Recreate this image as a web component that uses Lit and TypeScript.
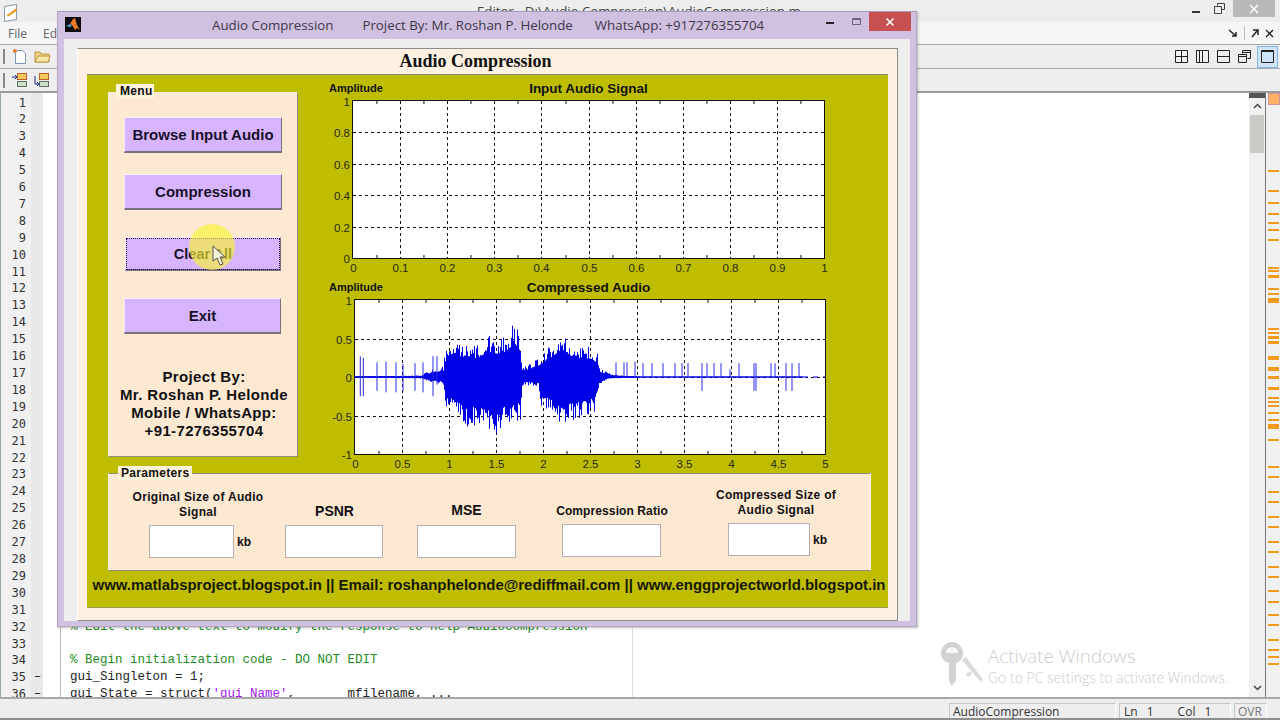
import { LitElement, html, css, svg } from "lit";
import { customElement, property } from "lit/decorators.js";

type Pt = [number, number];

const TOP_ENV: Pt[] = [
  [0, 0.01], [0.7, 0.02], [0.75, 0.06], [0.85, 0.1], [0.94, 0.14], [0.95, 0.3], [1.0, 0.5],
  [1.1, 0.42], [1.2, 0.45], [1.3, 0.4], [1.4, 0.55], [1.5, 0.5], [1.6, 0.55], [1.7, 0.72],
  [1.76, 0.55], [1.77, 0.12], [1.9, 0.2], [2.0, 0.3], [2.1, 0.45], [2.2, 0.6], [2.3, 0.45],
  [2.4, 0.4], [2.5, 0.4], [2.58, 0.3], [2.6, 0.1], [2.7, 0.06], [2.75, 0.03], [3.0, 0.01],
  [3.02, 0.005], [4.8, 0.005],
];
const BOT_ENV: Pt[] = [
  [0, 0.01], [0.7, 0.02], [0.75, 0.05], [0.94, 0.1], [0.95, 0.36], [1.05, 0.5], [1.2, 0.68],
  [1.3, 0.62], [1.5, 0.8], [1.6, 0.62], [1.76, 0.56], [1.78, 0.1], [1.95, 0.13], [1.96, 0.36],
  [2.1, 0.5], [2.2, 0.66], [2.3, 0.56], [2.4, 0.54], [2.55, 0.45], [2.6, 0.1], [2.7, 0.02],
  [3, 0.01], [4.8, 0.005],
];
// isolated clicks: x measured in px from the plot's left edge, then top/bottom amplitude
const CLICKS: [number, number, number][] = [
  [5.3, 0.27, 0.25], [8.3, 0.25, 0.25], [22, 0.19, 0.18], [31, 0.2, 0.2], [41, 0.19, 0.2],
  [48, 0.17, 0.18], [60, 0.18, 0.18], [68, 0.19, 0.2], [78, 0.27, 0.25], [82, 0.27, 0.1],
  [261, 0.19, 0], [269, 0.19, 0], [272, 0.19, 0], [280, 0.2, 0], [288, 0.18, 0], [297, 0.18, 0],
  [308, 0.18, 0], [320, 0.18, 0], [327, 0.18, 0], [333, 0.18, 0], [347, 0.18, 0.18], [352, 0.18, 0],
  [359, 0.18, 0], [366, 0.18, 0], [375, 0.1, 0], [384, 0.18, 0], [399, 0.18, 0.18], [401, 0.18, 0.18],
  [416, 0.18, 0], [420, 0.18, 0], [431, 0.18, 0.18], [437, 0.18, 0.18], [444, 0.18, 0],
];
const GUTTER_MARKS: [number, number][] = [
  [170, 2], [190, 2], [202, 2], [213, 2], [222, 2], [229, 2], [239, 2], [267, 2], [270, 2], [275, 3],
  [288, 2], [293, 2], [298, 5], [328, 2], [332, 2], [336, 3], [341, 3], [356, 4], [367, 4], [376, 3],
  [387, 3], [397, 2], [401, 2], [405, 2], [412, 2], [419, 2], [424, 5], [439, 2], [466, 2], [476, 2],
  [491, 2], [501, 2], [516, 2], [526, 2], [541, 2], [551, 2], [566, 2], [576, 2], [590, 2], [601, 2],
  [614, 2], [624, 2], [639, 2], [649, 2], [656, 2], [663, 2],
];

function interp(table: Pt[], t: number) {
  for (let i = 1; i < table.length; i++) {
    const [t0, v0] = table[i - 1];
    const [t1, v1] = table[i];
    if (t <= t1) return v0 + ((v1 - v0) * (t - t0)) / (t1 - t0);
  }
  return 0;
}

function wavePath(w: number, h: number) {
  let seed = 4711;
  const rnd = () => {
    seed = (seed * 1664525 + 1013904223) % 4294967296;
    return seed / 4294967296;
  };
  const mid = h / 2;
  let d = "";
  for (let x = 0; x < w; x += 1) {
    const t = (x / w) * 5;
    if (t > 3) break;
    const up = interp(TOP_ENV, t) * (0.6 + 0.42 * Math.pow(rnd(), 2));
    const down = interp(BOT_ENV, t) * (0.6 + 0.42 * Math.pow(rnd(), 2));
    d += `M${x + 0.5} ${(mid - up * mid).toFixed(1)}V${(mid + down * mid).toFixed(1)}`;
  }
  return d;
}

@customElement("audio-plot")
export class AudioPlot extends LitElement {
  static override styles = css`
    :host {
      display: block;
    }
    svg {
      display: block;
      overflow: visible;
    }
    .tick {
      font: 11.5px "Liberation Sans", Arial, sans-serif;
      fill: #2a2a1a;
    }
    .amp {
      font: bold 11px "Liberation Sans", Arial, sans-serif;
      fill: #111;
    }
    .title {
      font: bold 13.5px "Liberation Sans", Arial, sans-serif;
      fill: #111;
    }
  `;

  @property({ type: String }) heading = "";
  @property({ type: Number }) left = 0;
  @property({ type: Number }) top = 0;
  @property({ type: Number }) plotW = 0;
  @property({ type: Number }) plotH = 0;
  @property({ type: Number }) viewH = 0;
  @property({ attribute: false }) xTicks: string[] = [];
  @property({ attribute: false }) yTicks: string[] = [];
  @property({ type: Boolean }) wave = false;

  override render() {
    const { left: l, top: t, plotW: w, plotH: h } = this;
    const nx = this.xTicks.length - 1;
    const ny = this.yTicks.length - 1;
    const r = l + w;
    const b = t + h;
    return html`<svg width="540" height=${this.viewH}>
      <text class="amp" x="11" y="12">Amplitude</text>
      <text class="title" x="270.500" y="12.500" text-anchor="middle">${this.heading}</text>
      <rect x=${l} y=${t} width=${w} height=${h} fill="#fff"></rect>
      ${this.yTicks.map((label, i) => {
        const y = Math.round(b - (h * i) / ny) + 0.5;
        return svg`
          ${i > 0 && i < ny
            ? svg`<line x1=${l} x2=${r} y1=${y} y2=${y} stroke="#111" stroke-dasharray="3 3"></line>`
            : ""}
          <text class="tick" x=${l - 3} y=${y + 4} text-anchor="end">${label}</text>`;
      })}
      ${this.xTicks.map((label, i) => {
        const x = Math.round(l + (w * i) / nx) + 0.5;
        const half = x - w / nx / 2;
        return svg`
          ${i > 0 && i < nx
            ? svg`<line x1=${x} x2=${x} y1=${t} y2=${b} stroke="#111" stroke-dasharray="3 3"></line>`
            : ""}
          ${i > 0
            ? svg`<path d="M${half} ${t}v3M${half} ${b}v-3" stroke="#111"></path>`
            : ""}
          <text class="tick" x=${x} y=${b + 14} text-anchor="middle">${label}</text>`;
      })}
      ${this.wave
        ? svg`<g transform="translate(${l} ${t})">
            <path d=${wavePath(w, h)} stroke="#0000e6" stroke-width="1" fill="none"></path>
            <path d="M0 ${h / 2}H448" stroke="#0000e6" stroke-width="1.600"></path>
            <path d="M448 ${h / 2}H470" stroke="#0000e6" stroke-dasharray="5 5"></path>
            ${CLICKS.map(
              ([x, up, down]) =>
                svg`<path d="M${x} ${h / 2 - (up * h) / 2}V${h / 2 + (down * h) / 2}" stroke="#2a2ae6" stroke-width="1"></path>`,
            )}
          </g>`
        : ""}
      <rect x=${l - 0.5} y=${t - 0.5} width=${w + 1} height=${h + 1} fill="none" stroke="#111"></rect>
    </svg>`;
  }
}

@customElement("app-root")
export class AppRoot extends LitElement {
  static override styles = css`
    :host {
      display: block;
      position: relative;
      width: 1280px;
      height: 720px;
      overflow: hidden;
      background: #eeeeee;
      font-family: "Liberation Sans", Arial, sans-serif;
    }

    /* editor behind the figure */
    .editor {
      display: flex;
      flex-direction: column;
      height: 720px;
    }
    .top-title {
      display: flex;
      align-items: flex-start;
      height: 22px;
      flex: none;
      background: #ededed;
    }
    .app-icon {
      margin: 3px 0 0 3px;
    }
    .doc-name {
      margin: 2px 0 0 456px;
      font: 13.200px "Open Sans", sans-serif;
      color: #444;
      white-space: nowrap;
      width: 706px;
    }
    .win-btns {
      display: flex;
      align-items: flex-start;
    }
    .win-btn {
      width: 24px;
      height: 17px;
      display: flex;
      align-items: center;
      justify-content: center;
    }
    .win-close {
      width: 42px;
      margin-left: 2px;
      background: #b9b9b9;
    }
    .menu-bar {
      display: flex;
      align-items: center;
      justify-content: space-between;
      box-sizing: border-box;
      height: 23px;
      flex: none;
      background: #f5f5f5;
      border-bottom: 1px solid #a9a9a9;
      font: 12px "Open Sans", sans-serif;
      color: #666;
      padding: 0 6px 0 8px;
    }
    .menu-items {
      display: flex;
      gap: 16px;
    }
    .dock-icons {
      display: flex;
      align-items: center;
      gap: 6px;
    }
    .dock-sep {
      width: 1px;
      height: 14px;
      background: #bbb;
    }
    .tool-row {
      display: flex;
      align-items: center;
      justify-content: space-between;
      box-sizing: border-box;
      height: 24px;
      flex: none;
      background: #eeeeee;
      border-bottom: 1px solid #a9a9a9;
      padding-left: 3px;
    }
    .tool-left {
      display: flex;
      align-items: center;
      gap: 6px;
    }
    .grip {
      width: 2px;
      height: 15px;
      margin-right: 1px;
      background-image: radial-gradient(#888 1px, transparent 1px);
      background-size: 2px 5px;
    }
    .layout-icons {
      display: flex;
      align-items: center;
      gap: 4px;
      padding-right: 2px;
    }
    .layout-on {
      box-sizing: border-box;
      width: 21px;
      height: 22px;
      display: flex;
      align-items: center;
      justify-content: center;
      background: #cfe4f8;
      border: 1px solid #86b6e6;
    }
    .tool-row.tall {
      border-bottom: 2px solid #9c9c9c;
    }
    .edit-area {
      position: relative;
      flex: 1;
      display: flex;
      min-height: 0;
      border-left: 1px solid #9aa;
      overflow: hidden;
    }
    .code {
      flex: 1;
      min-width: 0;
      overflow: hidden;
      padding-top: 1.500px;
      background: linear-gradient(90deg, #f0f0f0 0 30px, #e8e8e8 30px 42px, #fff 42px);
    }
    .row {
      display: flex;
      height: 16.920px;
      line-height: 16.920px;
      white-space: pre;
    }
    .num {
      width: 25px;
      text-align: right;
      font: 12px/16.920px "DejaVu Sans Mono", monospace;
      color: #333;
    }
    .dash {
      width: 24px;
      padding-left: 8px;
      box-sizing: border-box;
      font: 12px/16.920px "Liberation Mono", monospace;
      color: #222;
    }
    .gap {
      width: 11px;
      margin-right: 9px;
      border-right: 1px solid #bbb;
      box-sizing: border-box;
    }
    .txt {
      font: 12.500px/16.920px "Liberation Mono", monospace;
      color: #222;
    }
    .cmt {
      color: #228b22;
    }
    .str {
      color: #a020f0;
    }
    .margin-line {
      position: absolute;
      left: 631px;
      top: 0;
      bottom: 0;
      width: 1px;
      background: #dcdcdc;
    }
    .scroll {
      width: 16px;
      display: flex;
      flex-direction: column;
      align-items: center;
      background: #f0f0f0;
    }
    .scroll-head {
      align-self: stretch;
      height: 5px;
      background: #555;
    }
    .scroll-up {
      margin-top: 5px;
    }
    .scroll-thumb {
      width: 14px;
      height: 38px;
      margin-top: 6px;
      background: #c9c9c6;
    }
    .scroll-down {
      margin-top: auto;
      margin-bottom: 6px;
    }
    .marks {
      position: relative;
      width: 15px;
      background: #f1f1f1;
      border-left: 1px solid #777;
      box-sizing: border-box;
    }
    .mark {
      position: absolute;
      left: 2px;
      right: 1px;
      background: #f39a1d;
    }
    .mark-box {
      position: absolute;
      left: 2px;
      top: 0;
      width: 10px;
      height: 10px;
      background: #ffb066;
      border: 1px solid #c99;
    }
    .status {
      display: flex;
      align-items: flex-end;
      flex: none;
      height: 19px;
      padding-right: 13px;
      justify-content: flex-end;
      gap: 3px;
      background: #eeeeee;
      border-top: 2px solid #a8a8a8;
      border-bottom: 2px solid #8f8f8f;
      box-sizing: content-box;
      font: 12px "Open Sans", sans-serif;
      color: #333;
    }
    .stat {
      display: flex;
      align-items: center;
      height: 15px;
      padding-left: 3px;
      box-sizing: border-box;
      border-top: 1px solid #c6c6c6;
      border-left: 1px solid #c6c6c6;
      border-right: 1px solid #fff;
    }
    .stat-name {
      width: 167px;
    }
    .stat-pos {
      width: 112px;
      word-spacing: 6px;
      padding-left: 4px;
    }
    .stat-pos span + span {
      margin-left: 24px;
    }
    .stat-ovr {
      width: 33px;
      color: #777;
    }

    .watermark {
      position: absolute;
      left: 940px;
      top: 642px;
      display: flex;
      gap: 5px;
      color: #cdcdcd;
      font-family: "Open Sans", sans-serif;
      white-space: nowrap;
    }
    .wm-1 {
      font-size: 18.800px;
      font-weight: 300;
      line-height: 24px;
      margin-top: 2px;
    }
    .wm-2 {
      font-size: 14px;
      font-weight: 300;
      line-height: 20px;
    }

    /* matlab figure window */
    .figure {
      position: absolute;
      left: 57px;
      top: 11px;
      width: 860px;
      height: 616px;
      box-sizing: border-box;
      background: #d0c1e0;
      border: 1px solid #b3a6c2;
      border-top: 1px solid #a89bb8;
      box-shadow: 1px 1px 2px rgba(0, 0, 0, 0.25);
      padding: 0 6px 5px;
      display: flex;
      flex-direction: column;
    }
    .fig-bar {
      display: flex;
      align-items: flex-start;
      height: 27px;
      flex: none;
      font: 13.300px "Open Sans", sans-serif;
      color: #3d3848;
      white-space: nowrap;
    }
    .fig-icon {
      flex: none;
      margin: 5px 0 0 1px;
    }
    .fig-title {
      flex: none;
      margin: 4px 0 0 131px;
      width: 605px;
      display: flex;
      gap: 29px;
    }
    .fig-phone {
      margin-left: -7px;
    }
    .fig-btn {
      flex: none;
      width: 26px;
      height: 19px;
      display: flex;
      align-items: center;
      justify-content: center;
    }
    .fig-close {
      width: 42px;
      background: #c75050;
    }
    .fig-body {
      flex: 1;
      background: #eeeeee;
      padding: 9px 13px 0;
      min-height: 0;
    }
    .cream {
      box-sizing: border-box;
      width: 821px;
      height: 573px;
      background: #fef1e2;
      border-top: 1px solid #8c8c8c;
      border-right: 1px solid #8c8c8c;
      border-bottom: 1px solid #8c8c8c;
      border-left: 1px solid #fff;
      padding: 0 9px 0;
    }
    .main-title {
      height: 25px;
      padding-right: 24px;
      text-align: center;
      font: bold 18px/24px "Liberation Serif", "Times New Roman", serif;
      color: #111;
    }
    .olive {
      box-sizing: border-box;
      width: 801px;
      height: 534px;
      background: #bfbd00;
      border-top: 1px solid #8e8e6a;
      border-bottom: 1px solid #9a9a50;
      padding: 5px 0 0 21px;
    }
    .top-row {
      display: flex;
      height: 389px;
    }
    .menu-panel {
      position: relative;
      box-sizing: border-box;
      width: 190px;
      height: 365px;
      margin-top: 12px;
      background: #fde8d2;
      border: 1px solid #f3f0e6;
      border-right-color: #8e8e7c;
      border-bottom-color: #8e8e7c;
      padding: 24px 0 0 15px;
    }
    .legend {
      position: absolute;
      background: #fff3da;
      font: bold 12px/14px "Liberation Sans", Arial, sans-serif;
      letter-spacing: 0.300px;
      color: #111;
      padding: 0 3px;
    }
    .menu-panel .legend {
      left: 7px;
      top: -9px;
      padding-left: 4px;
      padding-right: 1px;
    }
    .btn {
      box-sizing: border-box;
      display: flex;
      align-items: center;
      justify-content: center;
      width: 158px;
      height: 36px;
      background: #d7b4fe;
      border: 1px solid;
      border-color: #f6f0ff #77727d #77727d #f0e8ff;
      border-bottom-width: 2px;
      font: bold 15px "Liberation Sans", Arial, sans-serif;
      color: #17112a;
    }
    .btn-2 {
      margin-top: 21px;
    }
    .btn-3 {
      width: 156px;
      height: 34px;
      margin: 27px 0 0 1px;
      font-size: 14.500px;
      outline: 1px dotted #2a0a60;
      outline-offset: -2px;
    }
    .btn-4 {
      width: 157px;
      margin-top: 27px;
    }
    .credit {
      width: 190px;
      margin: 34px 0 0 -15px;
      text-align: center;
      font: bold 15px/18px "Liberation Sans", Arial, sans-serif;
      letter-spacing: 0.350px;
      color: #111;
    }
    .plots {
      margin-left: 20px;
    }
    .params {
      position: relative;
      box-sizing: border-box;
      display: flex;
      align-items: flex-end;
      width: 763px;
      height: 98px;
      margin-top: 4px;
      background: #fde8d2;
      border: 1px solid #8a8a70;
      border-left-color: #f3f0e6;
      border-right-color: #f3f0e6;
      border-bottom-color: #8e8e7c;
    }
    .params .legend {
      left: 9px;
      top: -8px;
    }
    .param {
      display: flex;
      flex-direction: column;
      flex: none;
      margin-bottom: 12px;
    }
    .p-label {
      text-align: center;
      white-space: nowrap;
      font: bold 12px/15px "Liberation Sans", Arial, sans-serif;
      letter-spacing: 0.300px;
      color: #111;
      margin-bottom: 5px;
    }
    .p-label.big {
      font-size: 14px;
      letter-spacing: 0;
      margin-bottom: 7px;
    }
    .p-input {
      display: flex;
      align-items: center;
      gap: 3px;
      font: bold 12px "Liberation Sans", Arial, sans-serif;
      color: #111;
    }
    .box {
      box-sizing: border-box;
      flex: none;
      height: 33px;
      background: #fff;
      border: 1px solid #b4b0b0;
    }
    .p1 {
      width: 136px;
      margin-left: 21px;
    }
    .p1 .p-input {
      margin-left: 19px;
    }
    .p1 .box {
      width: 85px;
    }
    .p2 {
      width: 99px;
      margin-left: 19px;
    }
    .p2 .p-label.big {
      margin-bottom: 6px;
    }
    .p2 .box {
      width: 98px;
    }
    .p3 {
      width: 99px;
      margin-left: 33px;
    }
    .p3 .box {
      width: 99px;
    }
    .p4 {
      width: 112px;
      margin-left: 40px;
      margin-bottom: 13px;
    }
    .p4 .p-label {
      letter-spacing: 0.100px;
    }
    .p4 .p-input {
      margin-left: 6px;
    }
    .p4 .box {
      width: 99px;
    }
    .p5 {
      width: 120px;
      margin-left: 48px;
      margin-bottom: 14px;
    }
    .p5 .p-input {
      margin-left: 12px;
    }
    .p5 .box {
      width: 82px;
    }
    .footer {
      margin-left: -19px;
      width: 800px;
      height: 35px;
      line-height: 28px;
      text-align: center;
      font-size: 14.950px;
      font-weight: bold;
      color: #17170a;
      white-space: nowrap;
    }

    .highlight {
      position: absolute;
      left: 189px;
      top: 224px;
      width: 46px;
      height: 46px;
      border-radius: 50%;
      background: rgba(250, 245, 40, 0.62);
    }
    .cursor {
      position: absolute;
      left: 212px;
      top: 245px;
    }
  `;

  private rows() {
    const code: Record<number, unknown> = {
      32: html`<span class="cmt">% Edit the above text to modify the response to help AudioCompression</span>`,
      34: html`<span class="cmt">% Begin initialization code - DO NOT EDIT</span>`,
      35: html`gui_Singleton = 1;`,
      36: html`gui_State = struct(<span class="str">'gui_Name'</span>,       mfilename, ...`,
    };
    return Array.from({ length: 36 }, (_, i) => {
      const n = i + 1;
      return html`<div class="row">
        <div class="num">${n}</div>
        <div class="dash">${n >= 35 ? "–" : ""}</div>
        <div class="gap"></div>
        <div class="txt">${code[n] ?? ""}</div>
      </div>`;
    });
  }

  override render() {
    return html`
      <div class="editor">
        <div class="top-title">
          <svg class="app-icon" width="18" height="20" viewBox="0 0 18 20">
            <path d="M1.500 3.500l12-2v15l-12 2z" fill="#fff" stroke="#8a9ab0"></path>
            <path d="M3.500 12.500l9-7 2 2-9 6z" fill="#e8a030"></path>
          </svg>
          <div class="doc-name">Editor - D:\\Audio Compression\\AudioCompression.m</div>
          <div class="win-btns">
            <div class="win-btn"><svg width="10" height="10"><path d="M2 8h8" stroke="#333" stroke-width="2"></path></svg></div>
            <div class="win-btn"><svg width="11" height="11"><path d="M3.500 2.500V.500h7v6H8M.500 3.500h7v7h-7z" fill="none" stroke="#444"></path></svg></div>
            <div class="win-btn win-close"><svg width="10" height="10"><path d="M1 1l8 8M9 1l-8 8" stroke="#fff" stroke-width="1.500"></path></svg></div>
          </div>
        </div>
        <div class="menu-bar">
          <div class="menu-items"><span>File</span><span>Edit</span></div>
          <div class="dock-icons">
            <svg width="10" height="10"><path d="M1 2l7 6M8 4v4H4" fill="none" stroke="#222" stroke-width="1.500"></path></svg>
            <div class="dock-sep"></div>
            <svg width="8" height="10"><path d="M1 9l5-6M2 2h5v5" fill="none" stroke="#222" stroke-width="1.500"></path></svg>
            <svg width="9" height="9"><path d="M1 1l7 7M8 1l-7 7" stroke="#222" stroke-width="1.300"></path></svg>
          </div>
        </div>
        <div class="tool-row">
          <div class="tool-left">
            <div class="grip"></div>
            <svg width="16" height="17" viewBox="0 0 16 17">
              <path d="M3.500 2.500h7l3 3v10h-10z" fill="#fff" stroke="#7a96b8"></path>
              <circle cx="3" cy="3" r="2" fill="#e07a3a"></circle>
            </svg>
            <svg width="17" height="15" viewBox="0 0 17 15">
              <path d="M1 3h5l1 2h8v8H1z" fill="#f2d488" stroke="#b9973f"></path>
              <path d="M1 13l3-6h12l-2 6z" fill="#fbe6a8" stroke="#b9973f"></path>
            </svg>
          </div>
          <div class="layout-icons">
            <svg width="17" height="13"><path d="M2.500.500h12v12h-12zM8.500.500v12M2.500 6.500h12" fill="none" stroke="#222"></path></svg>
            <svg width="17" height="13"><path d="M2.500.500h12v12h-12zM5.500.500v12M8.500.500v12" fill="none" stroke="#222"></path></svg>
            <svg width="17" height="13"><path d="M2.500.500h12v12h-12zM2.500 6.500h12" fill="none" stroke="#222"></path></svg>
            <svg width="17" height="13"><path d="M6.500 3.500V.500h8v8h-3M2.500 4.500h8v8h-8zM2.500 6.500h8M6.500 2.500h8" fill="none" stroke="#222"></path></svg>
            <div class="layout-on">
              <svg width="13" height="13"><path d="M.500.500h12v12H.500zM.500 1.500h12" fill="none" stroke="#222"></path></svg>
            </div>
          </div>
        </div>
        <div class="tool-row tall">
          <div class="tool-left">
            <div class="grip"></div>
            <svg width="16" height="16" viewBox="0 0 16 16">
              <rect x="5.500" y="1.500" width="9" height="6" fill="#f4c860" stroke="#c06020"></rect>
              <rect x="5.500" y="9.500" width="9" height="5" fill="#cfe0c8" stroke="#607060"></rect>
              <path d="M0 5h5M3 3l2 2-2 2" fill="none" stroke="#1a2a90"></path>
            </svg>
            <svg width="16" height="16" viewBox="0 0 16 16">
              <rect x="5.500" y="1.500" width="9" height="6" fill="#f4c860" stroke="#c06020"></rect>
              <rect x="5.500" y="9.500" width="9" height="5" fill="#cfe0c8" stroke="#607060"></rect>
              <path d="M1 4v8h4M3 10l2 2-2 2" fill="none" stroke="#1a2a90"></path>
            </svg>
          </div>
        </div>
        <div class="edit-area">
          <div class="code">${this.rows()}</div>
          <div class="margin-line"></div>
          <div class="scroll">
            <div class="scroll-head"></div>
            <svg class="scroll-up" width="9" height="6"><path d="M1 5l3.500-3.500L8 5" fill="none" stroke="#444" stroke-width="1.500"></path></svg>
            <div class="scroll-thumb"></div>
            <svg class="scroll-down" width="9" height="6"><path d="M1 1l3.500 3.500L8 1" fill="none" stroke="#444" stroke-width="1.500"></path></svg>
          </div>
          <div class="marks">
            <div class="mark-box"></div>
            ${GUTTER_MARKS.map(
              ([y, h]) => html`<div class="mark" style="top:${y - 93}px;height:${h}px"></div>`,
            )}
          </div>
        </div>
        <div class="status">
          <div class="stat stat-name">AudioCompression</div>
          <div class="stat stat-pos"><span>Ln 1</span><span>Col 1</span></div>
          <div class="stat stat-ovr">OVR</div>
        </div>
      </div>

      <div class="watermark">
        <svg width="43" height="44" viewBox="0 0 43 44">
          <path d="M12 0a11 11 0 0 1 11 11c0 5-3 9-7 10v17l-4 6-3-5V21c-5-1-8-5-8-10A11 11 0 0 1 12 0z" fill="#d2d2d2"></path>
          <path d="M6 11a6 6 0 0 1 12 0z" fill="#fff" opacity="0.85"></path>
          <path d="M22 18l17 20 4 2-1-4-16-21zM26 32l4-3 2 3-4 3z" fill="#dadada"></path>
        </svg>
        <div>
          <div class="wm-1">Activate Windows</div>
          <div class="wm-2">Go to PC settings to activate Windows.</div>
        </div>
      </div>

      <div class="figure">
        <div class="fig-bar">
          <svg class="fig-icon" width="16" height="15" viewBox="0 0 16 15">
            <rect width="16" height="15" fill="#0c0c10"></rect>
            <path d="M1 9l4-2 3-5 2-1 2 7 3 5-3-2-2 2-3-5-2-1z" fill="#e8792a"></path>
            <path d="M1 9l4-2 2 2-2 1z" fill="#4aa8d8"></path>
          </svg>
          <div class="fig-title">
            <span>Audio Compression</span>
            <span>Project By: Mr. Roshan P. Helonde</span>
            <span class="fig-phone">WhatsApp: +917276355704</span>
          </div>
          <div class="fig-btn"><svg width="10" height="10"><path d="M1 6h8" stroke="#222" stroke-width="2"></path></svg></div>
          <div class="fig-btn"><svg width="11" height="11"><path d="M1.500 2.500h8v6h-8zM1.500 3.500h8" fill="none" stroke="#6a6478"></path></svg></div>
          <div class="fig-btn fig-close"><svg width="10" height="10"><path d="M1.500 1.500l7 7M8.500 1.500l-7 7" stroke="#fff" stroke-width="1.500"></path></svg></div>
        </div>
        <div class="fig-body">
          <div class="cream">
            <div class="main-title">Audio Compression</div>
            <div class="olive">
              <div class="top-row">
                <div class="menu-panel">
                  <div class="legend">Menu</div>
                  <div class="btn">Browse Input Audio</div>
                  <div class="btn btn-2">Compression</div>
                  <div class="btn btn-3">Clear All</div>
                  <div class="btn btn-4">Exit</div>
                  <div class="credit">
                    Project By:<br />Mr. Roshan P. Helonde<br />Mobile / WhatsApp:<br />+91-7276355704
                  </div>
                </div>
                <div class="plots">
                  <audio-plot
                    heading="Input Audio Signal"
                    .left=${35} .top=${21} .plotW=${471} .plotH=${157} .viewH=${199}
                    .xTicks=${["0", "0.1", "0.2", "0.3", "0.4", "0.5", "0.6", "0.7", "0.8", "0.9", "1"]}
                    .yTicks=${["0", "0.2", "0.4", "0.6", "0.8", "1"]}
                  ></audio-plot>
                  <audio-plot
                    heading="Compressed Audio"
                    .left=${37} .top=${21} .plotW=${470} .plotH=${154} .viewH=${190}
                    .xTicks=${["0", "0.5", "1", "1.5", "2", "2.5", "3", "3.5", "4", "4.5", "5"]}
                    .yTicks=${["-1", "-0.5", "0", "0.5", "1"]}
                    .wave=${true}
                  ></audio-plot>
                </div>
              </div>
              <div class="params">
                <div class="legend">Parameters</div>
                <div class="param p1">
                  <div class="p-label">Original Size of Audio<br />Signal</div>
                  <div class="p-input"><div class="box"></div>kb</div>
                </div>
                <div class="param p2">
                  <div class="p-label big">PSNR</div>
                  <div class="p-input"><div class="box"></div></div>
                </div>
                <div class="param p3">
                  <div class="p-label big">MSE</div>
                  <div class="p-input"><div class="box"></div></div>
                </div>
                <div class="param p4">
                  <div class="p-label">Compression Ratio</div>
                  <div class="p-input"><div class="box"></div></div>
                </div>
                <div class="param p5">
                  <div class="p-label">Compressed Size of<br />Audio Signal</div>
                  <div class="p-input"><div class="box"></div>kb</div>
                </div>
              </div>
              <div class="footer">
                www.matlabsproject.blogspot.in || Email: roshanphelonde@rediffmail.com || www.enggprojectworld.blogspot.in
              </div>
            </div>
          </div>
        </div>
      </div>

      <div class="highlight"></div>
      <svg class="cursor" width="14" height="21" viewBox="0 0 14 21">
        <path d="M1 1v15l4-3 3 7 3-1-3-7h5z" fill="#f4f4d8" stroke="#555" stroke-width="1"></path>
      </svg>
    `;
  }
}

declare global {
  interface HTMLElementTagNameMap {
    "app-root": AppRoot;
    "audio-plot": AudioPlot;
  }
}
